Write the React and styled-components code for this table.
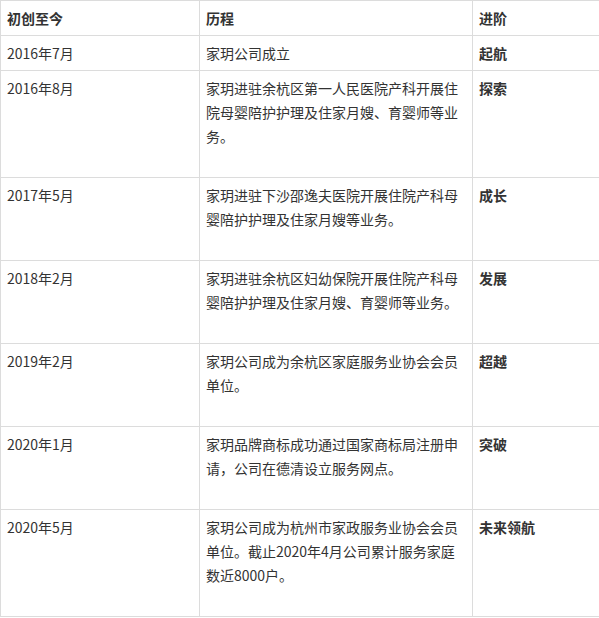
import React from 'react';
import styled, { createGlobalStyle } from 'styled-components';

const GlobalStyle = createGlobalStyle`
  html, body {
    margin: 0;
    padding: 0;
    background: #fff;
  }
`;

const Table = styled.table`
  border-collapse: collapse;
  table-layout: fixed;
  width: 599px;
  font-family: "Noto Sans CJK SC", "Liberation Sans", sans-serif;
  font-size: 14px;
  line-height: 24px;
  color: #333;

  td:last-child,
  th:last-child {
    border-right: none;
  }
`;

const Cell = styled.td`
  border: 1px solid #dcdcdc;
  padding: 5px 6px ${props => (props.$trail ? '29px' : '5px')} 6px;
  vertical-align: top;
  font-weight: ${props => (props.$bold ? 700 : 400)};
  word-break: break-all;
`;

const HeadCell = styled.th`
  border: 1px solid #dcdcdc;
  padding: 5px 6px;
  text-align: left;
  vertical-align: top;
  font-weight: 700;
`;

const rows = [
  { date: '2016年7月', text: '家玥公司成立', stage: '起航' },
  { date: '2016年8月', text: '家玥进驻余杭区第一人民医院产科开展住院母婴陪护护理及住家月嫂、育婴师等业务。', stage: '探索', trail: true },
  { date: '2017年5月', text: '家玥进驻下沙邵逸夫医院开展住院产科母婴陪护护理及住家月嫂等业务。', stage: '成长', trail: true },
  { date: '2018年2月', text: '家玥进驻余杭区妇幼保院开展住院产科母婴陪护护理及住家月嫂、育婴师等业务。', stage: '发展', trail: true },
  { date: '2019年2月', text: '家玥公司成为余杭区家庭服务业协会会员单位。', stage: '超越', trail: true },
  { date: '2020年1月', text: '家玥品牌商标成功通过国家商标局注册申请，公司在德清设立服务网点。', stage: '突破', trail: true },
  { date: '2020年5月', text: '家玥公司成为杭州市家政服务业协会会员单位。截止2020年4月公司累计服务家庭数近8000户。', stage: '未来领航', trail: true },
];

export default function App() {
  return (
    <>
      <GlobalStyle />
      <Table>
        <colgroup>
          <col style={{ width: 199 }} />
          <col style={{ width: 273 }} />
          <col />
        </colgroup>
        <thead>
          <tr>
            <HeadCell>初创至今</HeadCell>
            <HeadCell>历程</HeadCell>
            <HeadCell>进阶</HeadCell>
          </tr>
        </thead>
        <tbody>
          {rows.map(row => (
            <tr key={row.date}>
              <Cell>{row.date}</Cell>
              <Cell $trail={row.trail}>{row.text}</Cell>
              <Cell $bold>{row.stage}</Cell>
            </tr>
          ))}
        </tbody>
      </Table>
    </>
  );
}
